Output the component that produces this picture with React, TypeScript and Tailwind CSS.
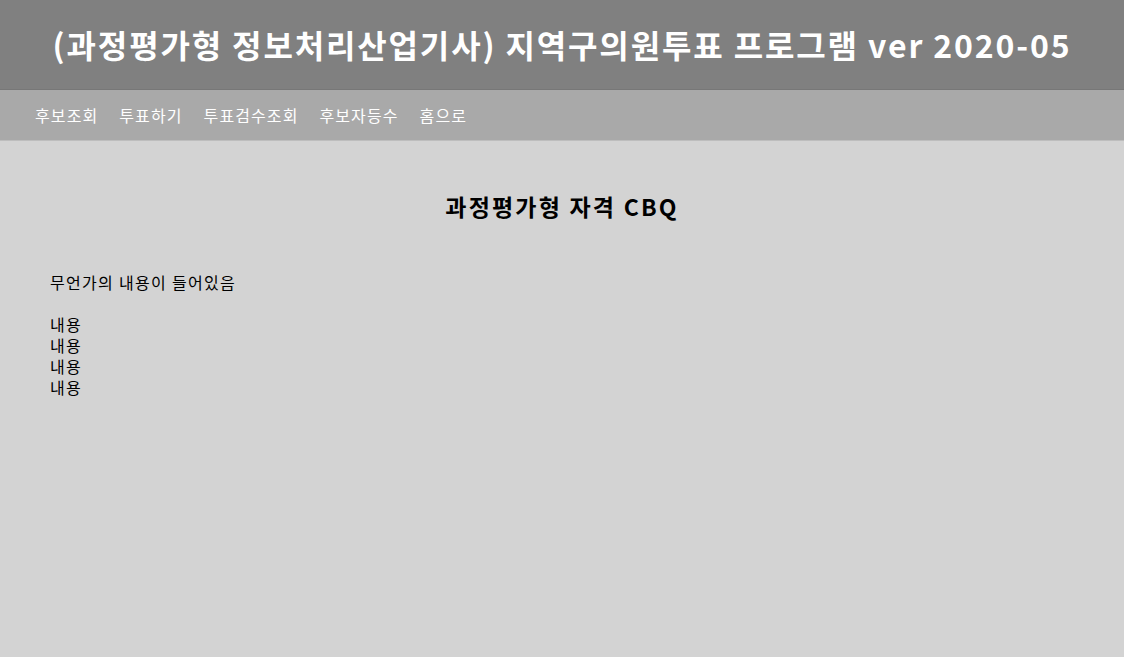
export default function App() {
  const menu = ["후보조회", "투표하기", "투표검수조회", "후보자등수", "홈으로"];
  const lines = ["내용", "내용", "내용", "내용"];

  return (
    <div className="min-h-[657px] flex flex-col bg-[#d3d3d3] text-black font-['Noto_Sans_CJK_KR','Noto_Sans',sans-serif]">
      <header className="h-[90px] bg-[#808080] border-b border-[#777777] flex items-center justify-center">
        <h1 className="text-[32px] font-bold text-white tracking-[1.85px] pb-[2px]">
          (과정평가형 정보처리산업기사) 지역구의원투표 프로그램 ver 2020-05
        </h1>
      </header>

      {/* Menu bar */}
      <nav className="h-[51px] bg-[#a9a9a9] border-b border-[#bdbdbd] flex items-center gap-[21px] px-[35px]">
        {menu.map((m) => (
          <a key={m} href="#" className="text-white text-[16px] leading-none tracking-[1.1px]">
            {m}
          </a>
        ))}
      </nav>

      <section className="flex-1 px-[50px]">
        <h2 className="text-center text-[23px] font-bold pt-[48px] tracking-[2.2px]">과정평가형 자격 CBQ</h2>
        <p className="mt-[48px] text-[16px] leading-[21px] tracking-[1.3px]">무언가의 내용이 들어있음</p>
        <div className="mt-[21px] flex flex-col">
          {lines.map((l, i) => (
            <span key={i} className="text-[16px] leading-[21px] tracking-[1.3px]">{l}</span>
          ))}
        </div>
      </section>
    </div>
  );
}
